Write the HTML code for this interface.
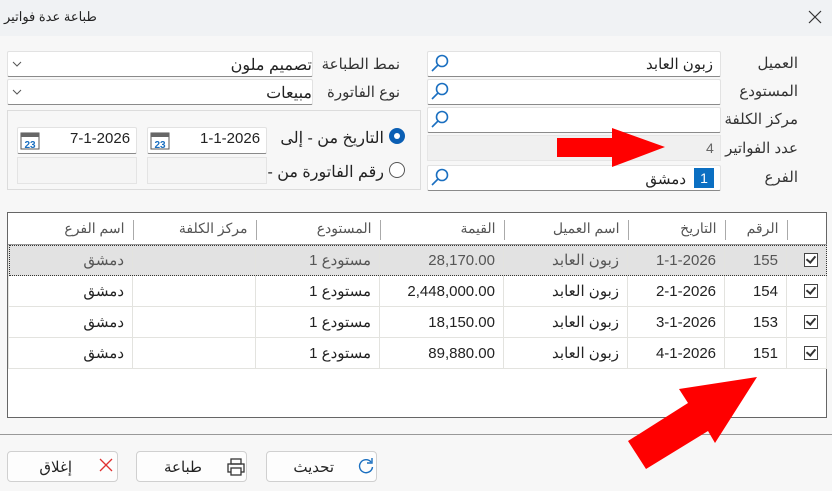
<!DOCTYPE html>
<html><head><meta charset="utf-8"><style>
body{margin:0;width:832px;height:491px;background:#f7f7f7;position:relative;overflow:hidden;font-family:"Liberation Sans","Noto Sans CJK SC",sans-serif;font-size:14px;color:#222}
.a{position:absolute;box-sizing:border-box}
.inp{background:#fff;border:1px solid #e2e2e2;border-bottom:1px solid #8a8a8a;border-radius:2px}
.lbl{color:#333;font-size:15px;text-align:right;direction:rtl;white-space:nowrap}
.t{direction:rtl;text-align:right;white-space:nowrap}
.btn{background:#fdfdfd;border:1px solid #d0d0d0;border-radius:4px}
table{border-collapse:collapse;table-layout:fixed}
td{border:1px solid #e3e3df;height:30px;padding:0 8px;text-align:right;direction:rtl;white-space:nowrap;font-size:15px}
th{font-weight:normal;color:#555;font-size:14px;text-align:right;direction:rtl;padding:0 8px;border-bottom:1px solid #999;height:31px;position:relative}
th span.s{position:absolute;right:-1px;top:7px;width:1px;height:20px;background:#aaa}
.cb{display:inline-block;width:12px;height:12px;border:1px solid #444;position:relative;top:2px;background:#fff}
.cb:after{content:"";position:absolute;left:3px;top:0px;width:4px;height:7px;border:solid #333;border-width:0 2.5px 2.5px 0;transform:rotate(40deg)}
</style></head><body>
<div class="a" style="left:0;top:0;width:832px;height:36px;background:#f0f2f4"></div>
<div class="a t" style="left:4px;top:9px;font-size:13px">طباعة عدة فواتير</div>
<svg class="a" style="left:808px;top:10px" width="14" height="14"><path d="M1 1L13 13M13 1L1 13" stroke="#333" stroke-width="1.2"/></svg>

<div class="a lbl" style="left:720px;top:54px;width:78px">العميل</div>
<div class="a lbl" style="left:720px;top:82px;width:78px">المستودع</div>
<div class="a lbl" style="left:720px;top:110px;width:78px">مركز الكلفة</div>
<div class="a lbl" style="left:720px;top:139px;width:78px">عدد الفواتير</div>
<div class="a lbl" style="left:720px;top:168px;width:78px">الفرع</div>
<div class="a inp" style="left:427px;top:51px;width:294px;height:26px"></div>
<div class="a t" style="left:500px;top:55px;width:213px;font-size:15px">زبون العابد</div>
<div class="a inp" style="left:427px;top:79px;width:294px;height:26px"></div>
<div class="a inp" style="left:427px;top:107px;width:294px;height:26px"></div>
<div class="a" style="left:427px;top:135px;width:294px;height:26px;background:#f0f0f0;border:1px solid #e6e6e6"></div>
<div class="a" style="left:706px;top:140px;color:#666">4</div>
<div class="a inp" style="left:427px;top:165px;width:294px;height:26px"></div>
<div class="a" style="left:694px;top:168px;width:20px;height:20px;background:#0b6fc2;color:#fff;text-align:center;line-height:20px">1</div>
<div class="a t" style="left:600px;top:170px;width:86px;font-size:15px">دمشق</div>
<svg class="a" style="left:428px;top:52px" width="24" height="140">
<g fill="none" stroke="#1a6fc0" stroke-width="1.6">
<circle cx="14" cy="9" r="5.5"/><line x1="10" y1="13" x2="4" y2="19"/>
<circle cx="14" cy="37" r="5.5"/><line x1="10" y1="41" x2="4" y2="47"/>
<circle cx="14" cy="65" r="5.5"/><line x1="10" y1="69" x2="4" y2="75"/>
<circle cx="14" cy="123" r="5.5"/><line x1="10" y1="127" x2="4" y2="133"/>
</g></svg>

<div class="a lbl" style="left:318px;top:55px;width:82px">نمط الطباعة</div>
<div class="a lbl" style="left:318px;top:83px;width:82px">نوع الفاتورة</div>
<div class="a inp" style="left:7px;top:51px;width:306px;height:26px"></div>
<div class="a t" style="left:100px;top:55px;width:212px;font-size:16px">تصميم ملون</div>
<div class="a inp" style="left:7px;top:79px;width:306px;height:26px"></div>
<div class="a t" style="left:100px;top:83px;width:212px;font-size:16px">مبيعات</div>
<svg class="a" style="left:12px;top:60px" width="12" height="40"><path d="M1 2l4 4 4-4M1 30l4 4 4-4" fill="none" stroke="#555" stroke-width="1"/></svg>

<div class="a" style="left:7px;top:110px;width:414px;height:80px;border:1px solid #dcdcdc"></div>
<div class="a" style="left:389px;top:128px;width:16px;height:16px;border-radius:50%;background:#0b5fb4"></div>
<div class="a" style="left:394px;top:133px;width:6px;height:6px;border-radius:50%;background:#fff"></div>
<div class="a" style="left:389px;top:162px;width:16px;height:16px;border-radius:50%;border:1px solid #555;background:#fff"></div>
<div class="a lbl" style="left:280px;top:128px;width:104px;color:#222;font-size:16px">التاريخ من - إلى</div>
<div class="a lbl" style="left:266px;top:162px;width:118px;overflow:hidden;color:#222;font-size:16px">رقم الفاتورة من - إلى</div>
<div class="a inp" style="left:147px;top:127px;width:120px;height:27px"></div>
<div class="a" style="left:200px;top:130px;font-size:15px">1-1-2026</div>
<div class="a inp" style="left:17px;top:127px;width:120px;height:27px"></div>
<div class="a" style="left:70px;top:130px;font-size:15px">7-1-2026</div>
<svg class="a" style="left:150px;top:130px" width="20" height="20"><rect x="1" y="3" width="18" height="16" fill="#fff" stroke="#555"/><rect x="1" y="3" width="18" height="4" fill="#666"/><text x="10" y="18" font-size="10" font-weight="bold" text-anchor="middle" fill="#1a6fc0" font-family="Liberation Sans">23</text></svg>
<svg class="a" style="left:20px;top:130px" width="20" height="20"><rect x="1" y="3" width="18" height="16" fill="#fff" stroke="#555"/><rect x="1" y="3" width="18" height="4" fill="#666"/><text x="10" y="18" font-size="10" font-weight="bold" text-anchor="middle" fill="#1a6fc0" font-family="Liberation Sans">23</text></svg>
<div class="a" style="left:147px;top:157px;width:120px;height:27px;border:1px solid #e4e4e4;background:#f5f5f5"></div>
<div class="a" style="left:17px;top:157px;width:120px;height:27px;border:1px solid #e4e4e4;background:#f5f5f5"></div>

<div class="a" style="left:7px;top:212px;width:820px;height:206px;background:#fff;border:1px solid #666"></div>
<table class="a" style="left:8px;top:213px;width:818px">
<colgroup><col style="width:124px"><col style="width:123px"><col style="width:124px"><col style="width:124px"><col style="width:124px"><col style="width:97px"><col style="width:62px"><col style="width:40px"></colgroup>
<tr><th>اسم الفرع<span class="s"></span></th><th>مركز الكلفة<span class="s"></span></th><th>المستودع<span class="s"></span></th><th>القيمة<span class="s"></span></th><th>اسم العميل<span class="s"></span></th><th>التاريخ<span class="s"></span></th><th>الرقم<span class="s"></span></th><th></th></tr>
<tr style="background:#e2e2e2;color:#555;outline:1px dotted #333;outline-offset:-1px"><td>دمشق</td><td></td><td>مستودع 1</td><td>28,170.00</td><td>زبون العابد</td><td>1-1-2026</td><td>155</td><td><span class="cb"></span></td></tr>
<tr><td>دمشق</td><td></td><td>مستودع 1</td><td>2,448,000.00</td><td>زبون العابد</td><td>2-1-2026</td><td>154</td><td><span class="cb"></span></td></tr>
<tr><td>دمشق</td><td></td><td>مستودع 1</td><td>18,150.00</td><td>زبون العابد</td><td>3-1-2026</td><td>153</td><td><span class="cb"></span></td></tr>
<tr><td>دمشق</td><td></td><td>مستودع 1</td><td>89,880.00</td><td>زبون العابد</td><td>4-1-2026</td><td>151</td><td><span class="cb"></span></td></tr>
</table>

<div class="a" style="left:0;top:434px;width:832px;height:1px;background:#999"></div>
<div class="a btn" style="left:7px;top:451px;width:111px;height:31px"></div>
<div class="a t" style="left:30px;top:458px;width:42px;font-size:15px">إغلاق</div>
<svg class="a" style="left:99px;top:458px" width="14" height="14"><path d="M1 1L13 13M13 1L1 13" stroke="#e03030" stroke-width="1.3"/></svg>
<div class="a btn" style="left:136px;top:451px;width:111px;height:31px"></div>
<div class="a t" style="left:150px;top:458px;width:52px;font-size:15px">طباعة</div>
<svg class="a" style="left:227px;top:458px" width="18" height="18"><g fill="none" stroke="#333" stroke-width="1.3"><rect x="4" y="1" width="10" height="5"/><rect x="1" y="6" width="16" height="8"/><rect x="4" y="10" width="10" height="7" fill="#fff"/></g></svg>
<div class="a btn" style="left:266px;top:451px;width:111px;height:31px"></div>
<div class="a t" style="left:280px;top:458px;width:54px;font-size:15px">تحديث</div>
<svg class="a" style="left:357px;top:457px" width="18" height="18"><path d="M14 5A6.5 6.5 0 1 0 15.5 10" fill="none" stroke="#1a6fc0" stroke-width="1.4"/><path d="M15 1v5h-5" fill="none" stroke="#1a6fc0" stroke-width="1.4"/></svg>

<svg class="a" style="left:0;top:0" width="832" height="491">
<polygon fill="#f00" points="557,138 612,138 612,128 665,147 612,167 612,157 557,157"/>
<polygon fill="#f00" points="757,377 715,443 708,431 646,469 628,441 688,403 679,389"/>
</svg>
</body></html>
